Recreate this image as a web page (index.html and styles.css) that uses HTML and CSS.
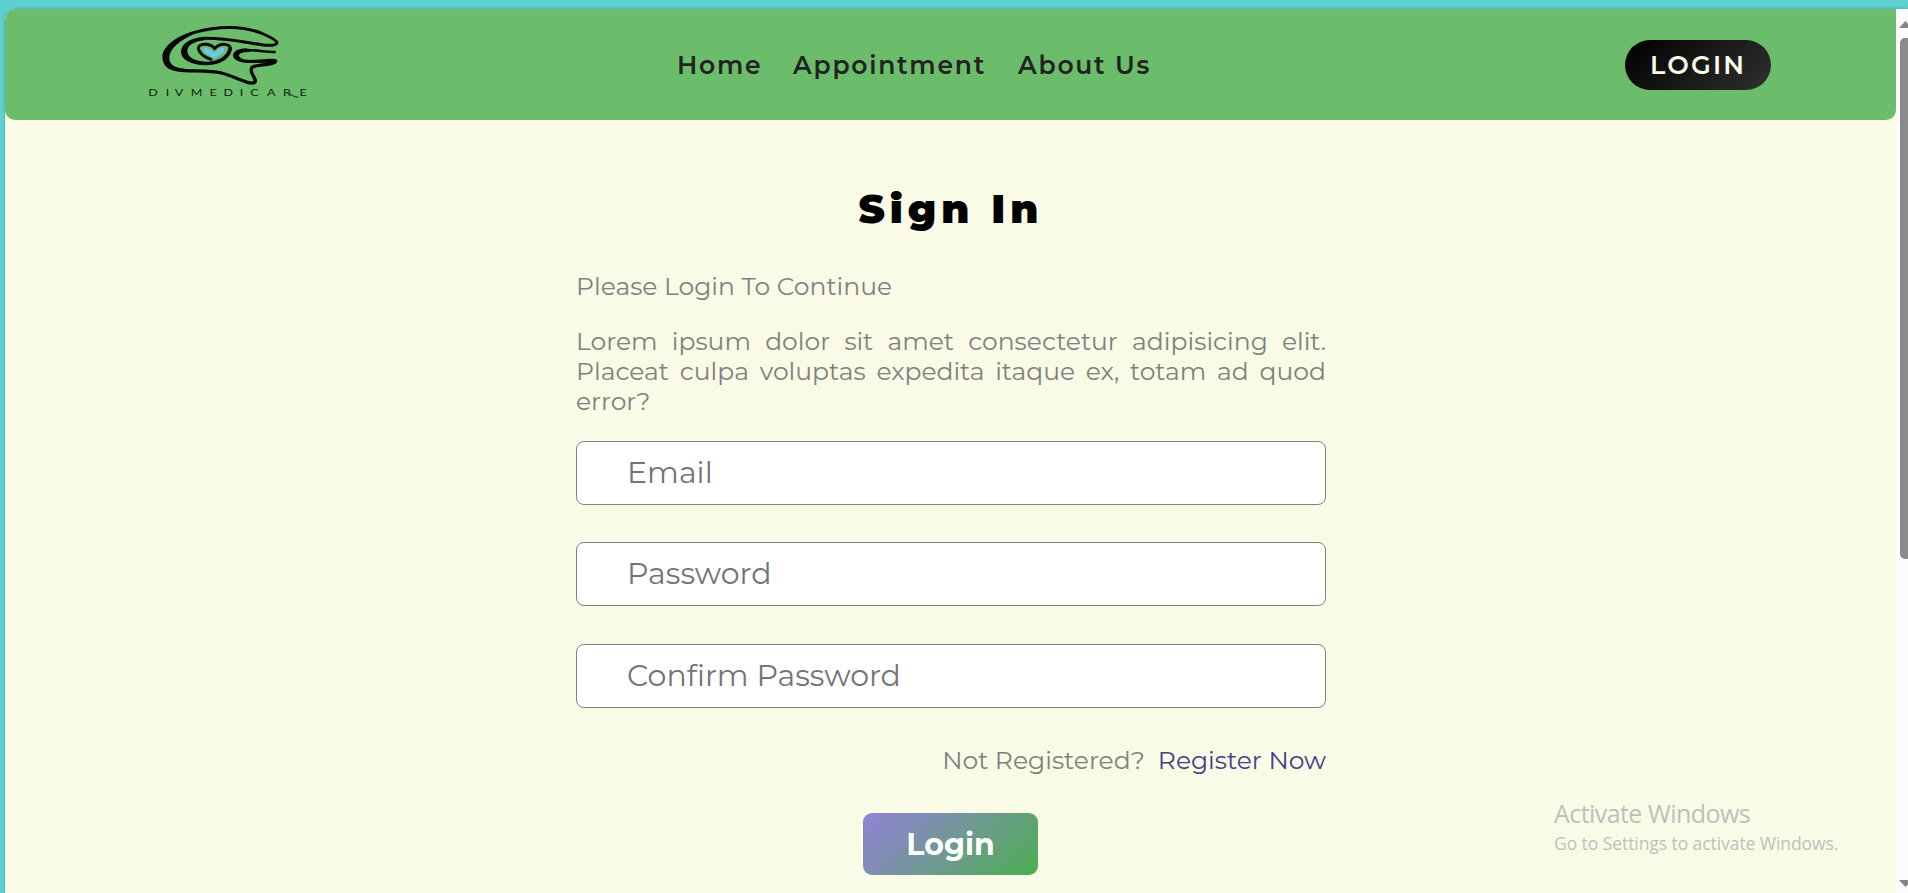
FILE: index.html
```html
<!DOCTYPE html>
<html lang="en">
<head>
<meta charset="utf-8">
<title>DivMedicare - Sign In</title>
<link rel="stylesheet" href="styles.css">
</head>
<body>
<div class="window">
  <div class="page">
    <header class="header">
      <svg class="logo" viewBox="0 0 600 330" width="200" height="110" role="img" aria-label="Divmedicare">
        <g fill="#050805">
          <path d="M196 62C135 78 97 112 97 140C97 167 115 183 155 186L165 176C130 174 117 162 118 142C119 115 150 90 198 70Z"/>
          <path d="M222 80C175 84 153 104 153 125C153 149 185 165 230 166C276 165 306 142 306 112L296 112C292 138 265 155 232 155C195 155 173 143 172 124C172 107 190 94 225 90Z"/>
          <path d="M350 115C320 116 308 127 309 138C312 150 330 158 352 159L372 158L372 150C342 150 328 145 327 137C327 128 342 126 362 126Z"/>
        </g>
        <g fill="none" stroke="#050805" stroke-linecap="round" stroke-linejoin="round">
          <path stroke-width="9" d="M194 67C260 48 340 45 400 72C425 83 440 91 441 98C440 106 420 108 395 104C340 98 300 84 222 85"/>
          <path stroke-width="10" d="M155 181C190 184 240 180 275 189C305 197 325 209 352 217C366 221 377 220 376 211C373 199 356 184 366 172C376 164 434 165 437 153C431 147 400 156 366 154"/>
          <path stroke-width="8" d="M434 126C404 127 380 119 348 120"/>
          <path stroke-width="9" d="M301 118C303 98 268 99 254 116C240 97 203 100 205 116C208 130 224 143 243 148"/>
          <path stroke="#72c7f2" stroke-width="14" d="M227 120L253 137L276 120"/>
        </g>
        <text class="logo-text" transform="scale(1.3 1)" x="42.3 82.5 103 140 183.5 216 253.5 277.5 316 353 391" y="257">DIVMEDICARE</text>
        <path d="M477 248C484 256 493 261 505 262" fill="none" stroke="#0d210d" stroke-width="3"/>
      </svg>
      <nav class="nav">
        <a class="nav-link nav-home">Home</a>
        <a class="nav-link nav-appointment">Appointment</a>
        <a class="nav-link nav-about">About Us</a>
      </nav>
      <a class="login-pill">LOGIN</a>
    </header>
    <main class="sign-in">
      <h1 class="title">Sign In</h1>
      <p class="lead">Please Login To Continue</p>
      <p class="intro">Lorem ipsum dolor sit amet consectetur adipisicing elit. Placeat culpa voluptas expedita itaque ex, totam ad quod error?</p>
      <form class="form">
        <input class="field" type="email" placeholder="Email">
        <input class="field field-password" type="password" placeholder="Password">
        <input class="field" type="password" placeholder="Confirm Password">
        <div class="register"><span class="question">Not Registered?</span><a class="register-link">Register Now</a></div>
        <button class="submit" type="button">Login</button>
      </form>
    </main>
  </div>
  <div class="scrollbar">
    <svg class="arrow" width="9" height="7" viewBox="0 0 9 7"><path d="M0 7L6.5 0L13 7Z" fill="#858585"/></svg>
    <div class="thumb"></div>
    <svg class="arrow" width="9" height="7" viewBox="0 0 9 7"><path d="M0 0L6.5 7L13 0Z" fill="#858585"/></svg>
  </div>
</div>
<aside class="watermark">
  <div class="watermark-title">Activate Windows</div>
  <div class="watermark-text">Go to Settings to activate Windows.</div>
</aside>
</body>
</html>
```
FILE: styles.css
```css
* { box-sizing: border-box; }
body {
  margin: 0;
  height: 893px;
  overflow: hidden;
  padding: 9px 0 0 5px;
  background: #5fd0d2;
  font-family: Montserrat, Inter, sans-serif;
}
.window {
  display: flex;
  height: 884px;
  overflow: hidden;
  border-radius: 10px 0 0 0;
  background: #f9fbe6;
  box-shadow: 0 0 3px rgba(0, 60, 70, .35);
}
.page { width: 1891px; }
.header {
  display: grid;
  grid-template-columns: 547px 1fr 146px;
  align-items: start;
  height: 111px;
  padding: 1px 125px 0;
  border-radius: 10px 0 10px 10px;
  background: #6bbd6b;
}
.logo { display: block; }
.logo-text { font: 400 29px Lato, sans-serif; fill: #0d210d; }
.nav { display: flex; gap: 35px; padding-top: 39px; white-space: nowrap; }
.nav-link {
  font-size: 25px;
  line-height: 32px;
  font-weight: 600;
  letter-spacing: 1.75px;
  color: #222;
}
.nav-home { width: 81px; }
.nav-appointment { width: 190px; }
.login-pill {
  height: 50px;
  margin-top: 30px;
  padding-left: 25px;
  border-radius: 25px;
  background: linear-gradient(135deg, #000, #303030);
  color: #f9fbe6;
  font-size: 25.6px;
  line-height: 50px;
  font-weight: 600;
  letter-spacing: 2.2px;
}
.sign-in { width: 750px; margin: 0 0 0 571px; padding-top: 64px; color: gray; }
.title {
  margin: 0;
  text-align: center;
  color: #000;
  font-size: 40px;
  line-height: 49px;
  font-weight: 900;
  letter-spacing: 5px;
}
.lead, .intro { margin: 0; font-size: 25px; line-height: 30px; }
.lead { margin-top: 38px; }
.intro { margin-top: 25px; text-align: justify; }
.form { display: flex; flex-direction: column; margin-top: 25px; }
.field {
  width: 750px;
  height: 64px;
  margin-bottom: 37px;
  padding: 0 50px 2px;
  border: 1px solid gray;
  border-radius: 8px;
  background: #fff;
  font: 400 30px Montserrat, Inter, sans-serif;
}
.field-password { margin-bottom: 38px; }
.field::placeholder { color: #757575; }
.register { display: flex; justify-content: flex-end; gap: 13px; font-size: 25px; line-height: 30px; }
.register-link { color: #483d8b; }
.submit {
  align-self: center;
  width: 175px;
  height: 62px;
  margin: 38px 1px 0 0;
  padding: 0;
  border: 0;
  border-radius: 9px;
  background: linear-gradient(135deg, #9381d8, #4caf50);
  color: #fff;
  font: 700 30px Montserrat, Inter, sans-serif;
}
.scrollbar {
  display: flex;
  flex-direction: column;
  width: 12px;
  padding: 12px 0 6px 3px;
  background: #fcfcfc;
}
.arrow { display: block; flex: none; }
.thumb { height: 521px; margin: 10px 0 auto 1px; border-radius: 5px 0 0 5px; background: #8b8b8b; }
.watermark {
  position: absolute;
  left: 1554px;
  top: 795px;
  color: #bfbfbb;
  font-family: "Segoe UI", "Open Sans", sans-serif;
  white-space: nowrap;
}
.watermark-title { font-size: 25px; line-height: 36px; letter-spacing: -.57px; }
.watermark-text { font-size: 17.5px; line-height: 24px; letter-spacing: -.07px; }
```
